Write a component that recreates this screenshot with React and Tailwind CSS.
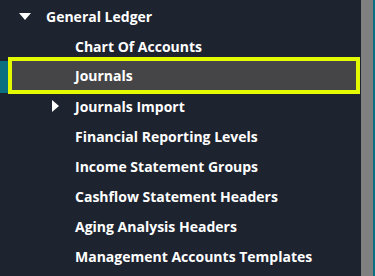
export default function App() {
  const items = [
    "Financial Reporting Levels",
    "Income Statement Groups",
    "Cashflow Statement Headers",
    "Aging Analysis Headers",
    "Management Accounts Templates",
  ];
  return (
    <div
      className="flex w-[375px] h-[276px] overflow-hidden bg-[#1e2330] text-white text-[14px] font-bold"
      style={{ fontFamily: '"Open Sans", "Noto Sans", sans-serif' }}
    >
      <div className="flex-1 flex flex-col pt-[1px]">
        <div className="flex items-center h-[30px]">
          <svg className="ml-[19px] mr-[15px]" width="12" height="7" viewBox="0 0 12 7">
            <polygon points="0,0 12,0 6,7" fill="#fff" />
          </svg>
          <span>General Ledger</span>
        </div>
        <div className="flex items-center h-[30px] pl-[75px]">Chart Of Accounts</div>
        <div className="relative h-[30px]">
          <div className="absolute left-0 top-0 w-[8px] h-[32px] bg-[#0b6f80]" />
          <div className="ml-[12px] mr-[5px] h-[29px] flex items-center pl-[63px] bg-[#454548] outline-4 outline-solid outline-[#e3fa00]">
            Journals
          </div>
        </div>
        <div className="flex items-center h-[30px]">
          <svg className="ml-[52px] mr-[16px]" width="7" height="12" viewBox="0 0 7 12">
            <polygon points="0,0 7,6 0,12" fill="#fff" />
          </svg>
          <span>Journals Import</span>
        </div>
        {items.map((t) => (
          <div key={t} className="flex items-center h-[30px] pl-[75px]">
            {t}
          </div>
        ))}
      </div>
      <div className="w-[12px] h-full bg-[#808080]" />
      <div className="w-[2px] h-full bg-[#0b6f80]" />
    </div>
  );
}
